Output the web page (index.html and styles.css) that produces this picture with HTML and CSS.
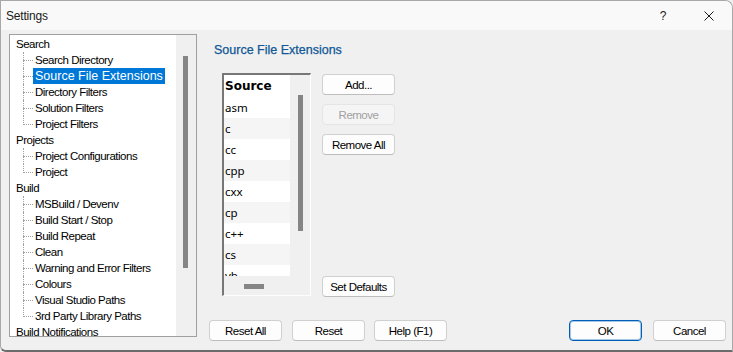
FILE: index.html
```html
<!DOCTYPE html>
<html lang="en">
<head>
  <meta charset="UTF-8" />
  <title>Settings</title>
  <link rel="stylesheet" href="styles.css">
</head>
<body>
  <div class="window">
    <div class="titlebar">
      <span class="title">Settings</span>
      <span class="spacer"></span>
      <span class="caption-btn help">?</span>
      <span class="caption-btn close">
        <svg width="10" height="10" viewBox="0 0 10 10">
          <path d="M0.5 0.5 L9.5 9.5 M9.5 0.5 L0.5 9.5" stroke="#1a1a1a" stroke-width="1" fill="none"/>
        </svg>
      </span>
    </div>

    <div class="main">
      <div class="tree">
        <div class="tree-items">
          <div class="node root">Search</div>
          <div class="node child">Search Directory</div>
          <div class="node child"><span class="selected">Source File Extensions</span></div>
          <div class="node child">Directory Filters</div>
          <div class="node child">Solution Filters</div>
          <div class="node child last">Project Filters</div>
          <div class="node root">Projects</div>
          <div class="node child">Project Configurations</div>
          <div class="node child last">Project</div>
          <div class="node root">Build</div>
          <div class="node child">MSBuild / Devenv</div>
          <div class="node child">Build Start / Stop</div>
          <div class="node child">Build Repeat</div>
          <div class="node child">Clean</div>
          <div class="node child">Warning and Error Filters</div>
          <div class="node child">Colours</div>
          <div class="node child">Visual Studio Paths</div>
          <div class="node child last">3rd Party Library Paths</div>
          <div class="node root">Build Notifications</div>
        </div>
        <div class="tree-scroll"><div class="tree-thumb"></div></div>
      </div>

      <div class="panel">
        <h2 class="heading">Source File Extensions</h2>

        <div class="editor">
          <div class="listbox">
            <div class="rows">
              <div class="row header">Source</div>
              <div class="row">asm</div>
              <div class="row alt">c</div>
              <div class="row">cc</div>
              <div class="row alt">cpp</div>
              <div class="row">cxx</div>
              <div class="row alt">cp</div>
              <div class="row">c++</div>
              <div class="row alt">cs</div>
              <div class="row">vb</div>
            </div>
            <div class="list-vscroll"><div class="vthumb"></div></div>
            <div class="list-hscroll"><div class="hthumb"></div></div>
            <div class="corner"></div>
          </div>

          <div class="side-buttons">
            <button class="btn first">Add...</button>
            <button class="btn" disabled>Remove</button>
            <button class="btn third">Remove All</button>
            <button class="btn defaults">Set Defaults</button>
          </div>
        </div>

        <div class="footer">
          <button class="btn">Reset All</button>
          <button class="btn reset">Reset</button>
          <button class="btn help-btn">Help (F1)</button>
          <span class="spacer"></span>
          <button class="btn default">OK</button>
          <button class="btn cancel">Cancel</button>
        </div>
      </div>
    </div>
  </div>
</body>
</html>
```

FILE: styles.css
```css
body {
  margin: 0;
  background-color: #f0f0f0;
}

.window {
  box-sizing: border-box;
  width: 733px;
  height: 352px;
  background: #f0f0f0;
  border: 1px solid #a8a8a8;
  border-bottom: 2px solid #6b6b6b;
  border-top-right-radius: 8px;
  border-bottom-left-radius: 6px;
  overflow: hidden;
  display: flex;
  flex-direction: column;
  font-family: "Liberation Sans", sans-serif;
  font-size: 11.5px;
  letter-spacing: -0.5px;
  color: #000;
}

.titlebar {
  height: 29px;
  background: #f9f9f9;
  display: flex;
  align-items: center;
  padding-left: 5px;
}

.title {
  font-size: 12px;
  letter-spacing: -0.2px;
  color: #1a1a1a;
}

.spacer {
  flex: 1;
}

.caption-btn {
  width: 46px;
  height: 29px;
  display: flex;
  align-items: center;
  justify-content: center;
}

.help {
  font-size: 12px;
  letter-spacing: 0;
  color: #1a1a1a;
}

.main {
  flex: 1;
  display: flex;
  align-items: flex-start;
  padding: 4px 6px 0 8px;
}

/* tree on the left */
.tree {
  box-sizing: border-box;
  width: 188px;
  height: 303px;
  border: 1px solid #a0a0a0;
  display: flex;
  background: #fff;
}

.tree-items {
  flex: 1;
  padding-top: 1px;
  overflow: hidden;
}

.node {
  position: relative;
  height: 16px;
  line-height: 16px;
  white-space: nowrap;
}

.root {
  padding-left: 6px;
}

.child {
  padding-left: 25px;
}

.child::before {
  content: "";
  position: absolute;
  left: 13px;
  top: 8px;
  width: 10px;
  border-top: 1px dotted #a0a0a0;
}

.child::after {
  content: "";
  position: absolute;
  left: 13px;
  top: 0;
  height: 16px;
  border-left: 1px dotted #a0a0a0;
}

.child.last::after {
  height: 9px;
}

.selected {
  display: inline-block;
  background: #0078d7;
  color: #fff;
  font-size: 12.5px;
  letter-spacing: 0;
  padding: 0 2px;
  margin-left: -2px;
}

.tree-scroll {
  width: 20px;
  background: #f0f0f0;
}

.tree-thumb {
  width: 5px;
  height: 212px;
  margin: 21px 0 0 7px;
  background: #858585;
}

/* right panel */
.panel {
  flex: 1;
  display: flex;
  flex-direction: column;
  padding-left: 12px;
}

.heading {
  margin: 9px 0 0 5px;
  font-size: 12.5px;
  font-weight: normal;
  letter-spacing: 0;
  line-height: 14px;
  color: #0f5795;
  -webkit-text-stroke: 0.25px #0f5795;
}

.editor {
  display: flex;
  align-items: flex-start;
  margin: 16px 0 0 13px;
}

.listbox {
  box-sizing: border-box;
  width: 89px;
  height: 223px;
  display: grid;
  grid-template-columns: 66px 20px;
  grid-template-rows: 201px 19px;
  border-top: 2px solid #777;
  border-left: 2px solid #777;
  border-right: 1px solid #fdfdfd;
  border-bottom: 1px solid #fdfdfd;
  background: #f0f0f0;
}

.rows {
  background: #fff;
  overflow: hidden;
}

.row {
  height: 21px;
  line-height: 21px;
  padding-left: 1px;
  font-family: "Noto Sans", sans-serif;
  font-size: 11.5px;
  letter-spacing: 0;
  color: #000;
}

.row.alt {
  background: #f5f5f5;
}

.row.header {
  height: 22px;
  line-height: 22px;
  font-family: "DejaVu Sans", sans-serif;
  font-weight: bold;
  font-size: 12px;
}

.vthumb {
  width: 5px;
  height: 136px;
  margin: 20px 0 0 8px;
  background: #858585;
}

.hthumb {
  width: 20px;
  height: 5px;
  margin: 8px 0 0 20px;
  background: #858585;
}

.side-buttons {
  height: 224px;
  display: flex;
  flex-direction: column;
  margin-left: 11px;
}

.btn {
  box-sizing: border-box;
  width: 73px;
  height: 21px;
  padding: 0;
  background: #fdfdfd;
  border: 1px solid #d0d0d0;
  border-bottom-color: #bdbdbd;
  border-radius: 4px;
  font-family: "Liberation Sans", sans-serif;
  font-size: 11.5px;
  letter-spacing: -0.5px;
  color: #000;
}

.btn:disabled {
  background: #f5f5f5;
  border-color: #e5e5e5;
  color: #a0a0a0;
}

.side-buttons .first {
  margin-top: 1px;
  margin-bottom: 9px;
}

.side-buttons .third {
  margin-top: 9px;
}

.side-buttons .defaults {
  margin-top: auto;
}

.footer {
  display: flex;
  margin-top: 23px;
}

.footer .reset {
  margin-left: 10px;
}

.footer .help-btn {
  margin-left: 9px;
}

.footer .cancel {
  margin-left: 11px;
}

.btn.default {
  border-color: #005fb8;
  box-shadow: inset 0 0 0 1px rgba(0, 95, 184, 0.35);
}
```
